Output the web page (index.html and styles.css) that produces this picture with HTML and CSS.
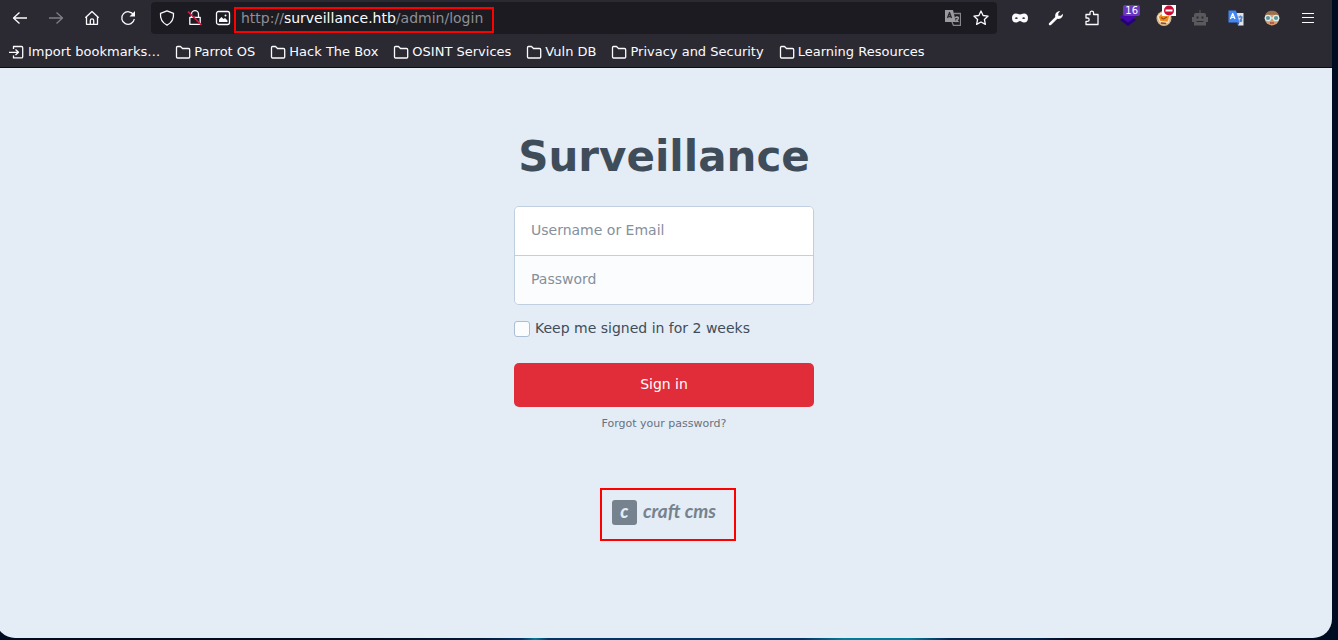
FILE: index.html
```html
<!DOCTYPE html>
<html lang="en">
<head>
<meta charset="utf-8">
<meta name="viewport" content="width=device-width, initial-scale=1">
<title>Sign in - Surveillance</title>
<link rel="stylesheet" href="styles.css">
</head>
<body>
<div class="window">
  <header class="chrome">
    <div class="toolbar">
      <nav class="nav-buttons" aria-label="Navigation">
        <button class="tool" aria-label="Back"><svg class="icon" viewBox="0 0 16 16"><path d="M15 8H1.500M7.500 2.500 1.500 8l6 5.500"/></svg></button>
        <button class="tool tool-disabled" aria-label="Forward" disabled><svg class="icon" viewBox="0 0 16 16"><path d="M1 8h13.500M8.500 2.500l6 5.500-6 5.500"/></svg></button>
        <button class="tool" aria-label="Home"><svg class="icon" viewBox="0 0 16 16"><path d="M1.300 7.800 8 1.500l6.700 6.300M2.500 7v7.300h11V7M6.300 14V10.500a1.700 1.700 0 0 1 3.400 0V14"/></svg></button>
        <button class="tool" aria-label="Reload"><svg class="icon" viewBox="0 0 16 16"><path d="M13.600 5A6.300 6.300 0 1 0 14.300 9"/><path class="solid" d="M15 1v5.500H9.500z"/></svg></button>
      </nav>
      <div class="urlbar">
        <button class="url-icon" aria-label="Tracking protection"><svg class="icon" viewBox="0 0 16 16"><path d="M8 .9 14.500 3.400c.4 5-1.600 9.300-6.500 11.800C3.100 12.700 1.100 8.400 1.500 3.400z"/></svg></button>
        <button class="url-icon" aria-label="Connection not secure"><svg class="icon" viewBox="0 0 16 16"><path d="M4.500 7V4.200a3.500 3.500 0 0 1 7 0V7M2.800 7.300h10.400v7H2.800z"/><path class="slash" d="M1 1.500 14.500 15"/></svg></button>
        <button class="url-icon" aria-label="Image permissions"><svg class="icon" viewBox="0 0 16 16"><rect x="1.500" y="1.500" width="13" height="13" rx="2"/><path class="solid" d="M4 12V9.500L6.500 7l2 2 1.500-1 2.500 2.500V12z"/><circle class="solid" cx="10.500" cy="5.500" r="1"/></svg></button>
        <div class="address marked" role="textbox" aria-label="Address" tabindex="0">http://<span class="address-host">surveillance.htb</span>/admin/login</div>
        <div class="url-actions">
          <button class="url-icon" aria-label="Translate page"><svg class="icon" viewBox="0 0 16 16"><path fill="#9b9b9e" stroke="none" d="M0 0h8l3 12H0z"/><path fill="none" stroke="#85858a" d="M9 3.500h6.500v12H8.500L7 12"/><path fill="none" stroke="#2b2a33" d="m2.500 8 2-5.500 2 5.500M3 6.500h3"/><path stroke="#9b9b9e" d="M10 7.500h4M12 6v1.500M13.500 8c-.5 2-1.500 3-3 4M11 9.500l2.500 2.500"/></svg></button>
          <button class="url-icon" aria-label="Bookmark this page"><svg class="icon" viewBox="0 0 16 16"><path d="m8 1 2.100 4.500 5 .6-3.700 3.400 1 4.900L8 12l-4.400 2.400 1-4.900L.9 6.100l5-.6z"/></svg></button>
        </div>
      </div>
      <div class="extensions">
        <button class="tool" aria-label="Mask"><svg class="icon" viewBox="0 0 16 16"><path class="solid" fill-rule="evenodd" d="M4 3.500C1.500 3.500 0 5 0 8s1.500 4.500 4 4.500c2 0 2.800-1.500 4-1.500s2 1.500 4 1.500c2.500 0 4-1.500 4-4.500s-1.500-4.500-4-4.500c-2 0-2.500 1-4 1s-2-1-4-1zM2.800 8.200C3.500 7 5 7 6 8.200 5 9.300 3.500 9.300 2.800 8.200zm7.200 0C11 7 12.500 7 13.200 8.200c-.7 1.100-2.200 1.100-3.200 0z"/></svg></button>
        <button class="tool" aria-label="Developer tools"><svg class="icon" viewBox="0 0 16 16"><path class="solid" d="M1 13.200 7.300 7C6.600 3.500 9 .8 12.200 1.200L10.300 3.300v2.500h2.500l2-2c.6 3.200-2 5.600-5.400 5L3 15.100C1.700 16 .2 14.500 1 13.200z"/></svg></button>
        <button class="tool" aria-label="Extensions"><svg class="icon" viewBox="0 0 16 16"><path d="M2 4.500h4V3a1.800 1.800 0 0 1 3.600 0v1.500H14v10H2v-3.200h1.500a1.600 1.600 0 0 0 0-3.300H2z"/></svg></button>
        <button class="tool" aria-label="Wappalyzer, 16 technologies"><svg class="icon" viewBox="0 0 16 16"><path fill="#230078" stroke="none" d="m0 10 3-2 5 3.500L13 8l3 2-8 6z"/><path fill="#4608ad" stroke="none" d="M0 6.500 8 1l8 5.500L8 12.500z"/></svg><span class="badge">16</span></button>
        <button class="tool" aria-label="Cookie editor"><svg class="icon" viewBox="0 0 16 16"><circle cx="8" cy="8.500" r="7.500" fill="#d8b68c" stroke="none"/><path fill="#f28a22" stroke="#fbe3bd" d="m2 6.500 3-3 9 2-2 7-8-1z"/><path stroke="#8e4d1b" d="M5 7.500 7.500 9 11 7M5 13l5 .5"/></svg><svg class="blocked" viewBox="0 0 14 11"><path fill="#fff" d="M0 0h14v11H0z"/><circle cx="7" cy="5.500" r="5" fill="#c90d34"/><path fill="#fff" d="M3.500 4.500h7v2h-7z"/></svg></button>
        <button class="tool" aria-label="Robot"><svg class="icon" viewBox="0 0 16 16"><path fill="#5a5a5d" stroke="none" fill-rule="evenodd" d="M7.500 0h1v3H12q2 0 2 2v2h2v5h-2v3.500H2V12H0V7h2V5q0-2 2-2h3.500zM4.500 6.500v2h2v-2zm5 0v2h2v-2zM4.500 11v1h7v-1z"/></svg></button>
        <button class="tool" aria-label="Google Translate"><svg class="icon" viewBox="0 0 16 16"><path fill="#e3e5e8" stroke="none" d="M8 3h7.500v12.500H10z"/><path fill="#4285f4" stroke="none" d="M.5.500H8l3.500 12H.5z"/><path fill="#174ea6" stroke="none" d="m8 12.500 3.500 0L10 15.500z"/><path stroke="#fff" d="m2.500 9 2.200-5.500L7 9M3.300 7.300h3"/><path stroke="#5385ce" d="M10.500 7h4M12.500 5.500V7M14 7.500c-.5 2-1.200 3-2.500 4M12 9l2 2.500"/></svg></button>
        <button class="tool" aria-label="User agent"><svg class="icon" viewBox="0 0 16 16"><circle cx="8" cy="8.200" r="7.300" fill="#d69b70" stroke="none"/><path fill="#9b714d" stroke="none" d="M1 6C2 2 5 .7 8 .7S14 2 15 6L8 4.500z"/><g fill="#60909b" stroke="#d5f0ee"><circle cx="4" cy="8" r="2.700"/><circle cx="12" cy="8" r="2.700"/></g><path stroke="#d5f0ee" d="M6.500 8h3"/><path stroke="#9c453b" d="M6 13h4"/></svg></button>
        <button class="tool" aria-label="Menu"><svg class="icon" viewBox="0 0 16 16"><path stroke-width="1" d="M2 3.500h12M2 7.500h12M2 12.500h12"/></svg></button>
      </div>
    </div>
    <nav class="bookmarks" aria-label="Bookmarks">
      <a class="bookmark" href="#"><svg class="icon" viewBox="0 0 16 16"><path d="M4.500 5V2.500h8q1.200 0 1.200 1.200v9q0 1.200-1.200 1.200h-8V11.500M0 8.300h9M6.500 5.500l3 2.800-3 2.800"/></svg>Import bookmarks…</a>
      <a class="bookmark" href="#"><svg class="icon" viewBox="0 0 16 16"><path d="M1.500 13V3.500q0-1 1-1h3l2 2h6q1.200 0 1.200 1.200V13q0 1-1 1H2.500q-1 0-1-1z"/></svg>Parrot OS</a>
      <a class="bookmark" href="#"><svg class="icon" viewBox="0 0 16 16"><path d="M1.500 13V3.500q0-1 1-1h3l2 2h6q1.200 0 1.200 1.200V13q0 1-1 1H2.500q-1 0-1-1z"/></svg>Hack The Box</a>
      <a class="bookmark" href="#"><svg class="icon" viewBox="0 0 16 16"><path d="M1.500 13V3.500q0-1 1-1h3l2 2h6q1.200 0 1.200 1.200V13q0 1-1 1H2.500q-1 0-1-1z"/></svg>OSINT Services</a>
      <a class="bookmark" href="#"><svg class="icon" viewBox="0 0 16 16"><path d="M1.500 13V3.500q0-1 1-1h3l2 2h6q1.200 0 1.200 1.200V13q0 1-1 1H2.500q-1 0-1-1z"/></svg>Vuln DB</a>
      <a class="bookmark" href="#"><svg class="icon" viewBox="0 0 16 16"><path d="M1.500 13V3.500q0-1 1-1h3l2 2h6q1.200 0 1.200 1.200V13q0 1-1 1H2.500q-1 0-1-1z"/></svg>Privacy and Security</a>
      <a class="bookmark" href="#"><svg class="icon" viewBox="0 0 16 16"><path d="M1.500 13V3.500q0-1 1-1h3l2 2h6q1.200 0 1.200 1.200V13q0 1-1 1H2.500q-1 0-1-1z"/></svg>Learning Resources</a>
    </nav>
  </header>
  <main class="page">
    <h1 class="title">Surveillance</h1>
    <form class="login">
      <div class="fields">
        <input class="field" type="text" placeholder="Username or Email" aria-label="Username or Email">
        <input class="field field-password" type="password" placeholder="Password" aria-label="Password">
      </div>
      <div class="remember">
        <input class="checkbox" type="checkbox" id="remember">
        <label for="remember">Keep me signed in for 2 weeks</label>
      </div>
      <button class="submit" type="submit">Sign in</button>
      <a class="forgot" href="#">Forgot your password?</a>
    </form>
    <a class="powered marked" href="#"><span class="mark">c</span><span class="brand">craft cms</span></a>
  </main>
</div>
</body>
</html>
```
FILE: styles.css
```css
* {
  box-sizing: border-box;
}

body {
  margin: 0;
  min-height: 100vh;
  overflow: hidden;
  display: flex;
  font-family: "DejaVu Sans", sans-serif;
  font-size: 14px;
  background: linear-gradient(90deg, #000c22 0 28%, #001b3b 36%, #003568 39%, #007d9c 40%, #003568 41% 60%, #007d9c 63% 68%, #00264f 71% 77%, #000c22 80%);
}

button,
input {
  font: inherit;
}

button {
  border: 0;
  padding: 0;
  background: none;
  color: inherit;
}

a {
  color: inherit;
  text-decoration: none;
}

/* The window reaches slightly past the left edge of the screen. */
.window {
  flex: 1;
  display: flex;
  flex-direction: column;
  margin: 0 6px 2px -4px;
  border-radius: 0 0 19px 19px;
  overflow: hidden;
  background: #e4ecf5;
}

.chrome {
  background: #2b2a33;
  color: #fbfbfe;
  border-bottom: 1px solid #0c0c0d;
}

.toolbar {
  display: flex;
  align-items: center;
  gap: 5px;
  padding: 2px 6px;
}

.nav-buttons,
.extensions {
  display: flex;
}

.tool {
  position: relative;
  width: 36px;
  height: 32px;
  display: flex;
  align-items: center;
  justify-content: center;
}

.tool-disabled {
  opacity: 0.4;
}

.icon {
  width: 16px;
  height: 16px;
  flex: none;
  fill: none;
  stroke: currentColor;
  stroke-width: 1.3;
  stroke-linejoin: round;
}

.icon .solid {
  fill: currentColor;
  stroke: none;
}

.icon .slash {
  stroke: #e2163f;
  stroke-width: 1.7;
}

.badge {
  position: absolute;
  top: 3px;
  right: 6px;
  padding: 0 2px;
  border-radius: 2px;
  background: #6b38bd;
  color: #fff;
  font-size: 10px;
  line-height: 11px;
}

.blocked {
  position: absolute;
  top: 3px;
  right: 6px;
  width: 14px;
  height: 11px;
}

.urlbar {
  flex: 1;
  height: 32px;
  display: flex;
  align-items: center;
  padding: 0 2px;
  border-radius: 4px;
  background: #1c1b22;
}

.url-icon {
  width: 28px;
  height: 28px;
  display: flex;
  align-items: center;
  justify-content: center;
}

.marked {
  border: 2px solid #f00;
}

.address {
  margin-top: 4px;
  margin-left: -3px;
  padding: 0 9px 0 5px;
  height: 26px;
  line-height: 18px;
  color: #8f8f95;
  white-space: nowrap;
}

.address-host {
  color: #fbfbfe;
}

.url-actions {
  display: flex;
  margin-left: auto;
}

.bookmarks {
  display: flex;
  gap: 15px;
  padding: 6px 12px 5px 13px;
  font-size: 13px;
  line-height: 20px;
}

.bookmark {
  display: flex;
  align-items: center;
  gap: 3px;
  white-space: nowrap;
}

.page {
  flex: 1;
  display: flex;
  flex-direction: column;
  align-items: center;
  padding: 64px 16px;
  color: #3f4d5a;
}

.title {
  margin: 0 0 24px;
  font-size: 42px;
  line-height: 50px;
}

.login {
  width: 100%;
  max-width: 300px;
  display: flex;
  flex-direction: column;
}

.fields {
  display: flex;
  flex-direction: column;
  border: 1px solid #c0cfe0;
  border-radius: 5px;
  overflow: hidden;
}

.field {
  height: 48px;
  padding: 0 16px 2px;
  border: 0;
  background: #fff;
  color: #3f4d5a;
}

.field::placeholder {
  color: #85909b;
  opacity: 1;
}

.field-password {
  height: 49px;
  border-top: 1px solid #c0cfe0;
  background: #fbfcfe;
}

.remember {
  display: flex;
  align-items: center;
  gap: 5px;
  margin: 14px 0 24px;
  line-height: 18px;
}

.remember label {
  padding-bottom: 2px;
}

.checkbox {
  appearance: none;
  width: 16px;
  height: 16px;
  margin: 0;
  border: 1px solid #acbed2;
  border-radius: 3px;
  background: #fbfcfe;
}

.submit {
  height: 44px;
  padding-bottom: 2px;
  border-radius: 5px;
  background: #e12d39;
  color: #fff;
}

.forgot {
  align-self: center;
  margin-top: 8px;
  font-size: 11px;
  line-height: 18px;
  color: #66727e;
}

/* The left margin makes up for the wider right padding, so the logo stays centred. */
.powered {
  display: flex;
  gap: 6px;
  margin: 55px 0 0 8px;
  padding: 10px 18px 14px 10px;
  color: #76828d;
}

.mark {
  width: 25px;
  height: 25px;
  border-radius: 3px;
  background: #76828d;
  color: #e4ecf5;
  font: italic 900 18px/22px Lato, sans-serif;
  text-align: center;
}

.brand {
  font: italic bold 19px/22px Lato, sans-serif;
}
```
